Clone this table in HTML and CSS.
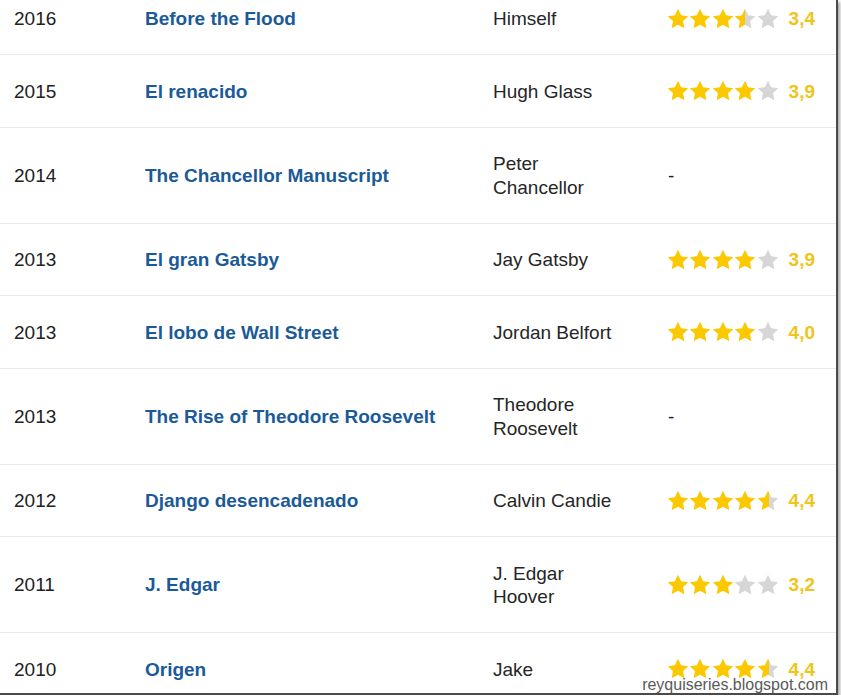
FILE: index.html
```html
<!DOCTYPE html>
<html lang="es">
<head>
<meta charset="utf-8">
<title>Filmografía</title>
<link rel="stylesheet" href="styles.css">
</head>
<body>
<div class="frame">
  <div class="list">
    <div class="row">
      <div class="year">2016</div>
      <div class="title">Before the Flood</div>
      <div class="role">Himself</div>
      <div class="rate">
        <span class="stars">
          <svg class="star on" viewBox="0 0 24 24"><path d="M12 .8l3.4 7.1 7.8 1-5.7 5.4 1.4 7.7L12 18.3l-6.9 3.7 1.4-7.7L.8 8.9l7.8-1z"/></svg><svg class="star on" viewBox="0 0 24 24"><path d="M12 .8l3.4 7.1 7.8 1-5.7 5.4 1.4 7.7L12 18.3l-6.9 3.7 1.4-7.7L.8 8.9l7.8-1z"/></svg><svg class="star on" viewBox="0 0 24 24"><path d="M12 .8l3.4 7.1 7.8 1-5.7 5.4 1.4 7.7L12 18.3l-6.9 3.7 1.4-7.7L.8 8.9l7.8-1z"/></svg><svg class="star" viewBox="0 0 24 24"><defs><linearGradient id="h1"><stop offset="50%" stop-color="#fcc800"/><stop offset="50%" stop-color="#d6d6d6"/></linearGradient></defs><path fill="url(#h1)" d="M12 .8l3.4 7.1 7.8 1-5.7 5.4 1.4 7.7L12 18.3l-6.9 3.7 1.4-7.7L.8 8.9l7.8-1z"/></svg><svg class="star off" viewBox="0 0 24 24"><path d="M12 .8l3.4 7.1 7.8 1-5.7 5.4 1.4 7.7L12 18.3l-6.9 3.7 1.4-7.7L.8 8.9l7.8-1z"/></svg>
        </span>
        <span class="num">3,4</span>
      </div>
    </div>
    <div class="row">
      <div class="year">2015</div>
      <div class="title">El renacido</div>
      <div class="role">Hugh Glass</div>
      <div class="rate">
        <span class="stars">
          <svg class="star on" viewBox="0 0 24 24"><path d="M12 .8l3.4 7.1 7.8 1-5.7 5.4 1.4 7.7L12 18.3l-6.9 3.7 1.4-7.7L.8 8.9l7.8-1z"/></svg><svg class="star on" viewBox="0 0 24 24"><path d="M12 .8l3.4 7.1 7.8 1-5.7 5.4 1.4 7.7L12 18.3l-6.9 3.7 1.4-7.7L.8 8.9l7.8-1z"/></svg><svg class="star on" viewBox="0 0 24 24"><path d="M12 .8l3.4 7.1 7.8 1-5.7 5.4 1.4 7.7L12 18.3l-6.9 3.7 1.4-7.7L.8 8.9l7.8-1z"/></svg><svg class="star on" viewBox="0 0 24 24"><path d="M12 .8l3.4 7.1 7.8 1-5.7 5.4 1.4 7.7L12 18.3l-6.9 3.7 1.4-7.7L.8 8.9l7.8-1z"/></svg><svg class="star off" viewBox="0 0 24 24"><path d="M12 .8l3.4 7.1 7.8 1-5.7 5.4 1.4 7.7L12 18.3l-6.9 3.7 1.4-7.7L.8 8.9l7.8-1z"/></svg>
        </span>
        <span class="num">3,9</span>
      </div>
    </div>
    <div class="row">
      <div class="year">2014</div>
      <div class="title">The Chancellor Manuscript</div>
      <div class="role">Peter Chancellor</div>
      <div class="rate"><span class="dash">-</span></div>
    </div>
    <div class="row">
      <div class="year">2013</div>
      <div class="title">El gran Gatsby</div>
      <div class="role">Jay Gatsby</div>
      <div class="rate">
        <span class="stars">
          <svg class="star on" viewBox="0 0 24 24"><path d="M12 .8l3.4 7.1 7.8 1-5.7 5.4 1.4 7.7L12 18.3l-6.9 3.7 1.4-7.7L.8 8.9l7.8-1z"/></svg><svg class="star on" viewBox="0 0 24 24"><path d="M12 .8l3.4 7.1 7.8 1-5.7 5.4 1.4 7.7L12 18.3l-6.9 3.7 1.4-7.7L.8 8.9l7.8-1z"/></svg><svg class="star on" viewBox="0 0 24 24"><path d="M12 .8l3.4 7.1 7.8 1-5.7 5.4 1.4 7.7L12 18.3l-6.9 3.7 1.4-7.7L.8 8.9l7.8-1z"/></svg><svg class="star on" viewBox="0 0 24 24"><path d="M12 .8l3.4 7.1 7.8 1-5.7 5.4 1.4 7.7L12 18.3l-6.9 3.7 1.4-7.7L.8 8.9l7.8-1z"/></svg><svg class="star off" viewBox="0 0 24 24"><path d="M12 .8l3.4 7.1 7.8 1-5.7 5.4 1.4 7.7L12 18.3l-6.9 3.7 1.4-7.7L.8 8.9l7.8-1z"/></svg>
        </span>
        <span class="num">3,9</span>
      </div>
    </div>
    <div class="row">
      <div class="year">2013</div>
      <div class="title">El lobo de Wall Street</div>
      <div class="role">Jordan Belfort</div>
      <div class="rate">
        <span class="stars">
          <svg class="star on" viewBox="0 0 24 24"><path d="M12 .8l3.4 7.1 7.8 1-5.7 5.4 1.4 7.7L12 18.3l-6.9 3.7 1.4-7.7L.8 8.9l7.8-1z"/></svg><svg class="star on" viewBox="0 0 24 24"><path d="M12 .8l3.4 7.1 7.8 1-5.7 5.4 1.4 7.7L12 18.3l-6.9 3.7 1.4-7.7L.8 8.9l7.8-1z"/></svg><svg class="star on" viewBox="0 0 24 24"><path d="M12 .8l3.4 7.1 7.8 1-5.7 5.4 1.4 7.7L12 18.3l-6.9 3.7 1.4-7.7L.8 8.9l7.8-1z"/></svg><svg class="star on" viewBox="0 0 24 24"><path d="M12 .8l3.4 7.1 7.8 1-5.7 5.4 1.4 7.7L12 18.3l-6.9 3.7 1.4-7.7L.8 8.9l7.8-1z"/></svg><svg class="star off" viewBox="0 0 24 24"><path d="M12 .8l3.4 7.1 7.8 1-5.7 5.4 1.4 7.7L12 18.3l-6.9 3.7 1.4-7.7L.8 8.9l7.8-1z"/></svg>
        </span>
        <span class="num">4,0</span>
      </div>
    </div>
    <div class="row">
      <div class="year">2013</div>
      <div class="title">The Rise of Theodore Roosevelt</div>
      <div class="role">Theodore Roosevelt</div>
      <div class="rate"><span class="dash">-</span></div>
    </div>
    <div class="row">
      <div class="year">2012</div>
      <div class="title">Django desencadenado</div>
      <div class="role">Calvin Candie</div>
      <div class="rate">
        <span class="stars">
          <svg class="star on" viewBox="0 0 24 24"><path d="M12 .8l3.4 7.1 7.8 1-5.7 5.4 1.4 7.7L12 18.3l-6.9 3.7 1.4-7.7L.8 8.9l7.8-1z"/></svg><svg class="star on" viewBox="0 0 24 24"><path d="M12 .8l3.4 7.1 7.8 1-5.7 5.4 1.4 7.7L12 18.3l-6.9 3.7 1.4-7.7L.8 8.9l7.8-1z"/></svg><svg class="star on" viewBox="0 0 24 24"><path d="M12 .8l3.4 7.1 7.8 1-5.7 5.4 1.4 7.7L12 18.3l-6.9 3.7 1.4-7.7L.8 8.9l7.8-1z"/></svg><svg class="star on" viewBox="0 0 24 24"><path d="M12 .8l3.4 7.1 7.8 1-5.7 5.4 1.4 7.7L12 18.3l-6.9 3.7 1.4-7.7L.8 8.9l7.8-1z"/></svg><svg class="star" viewBox="0 0 24 24"><defs><linearGradient id="h2"><stop offset="55%" stop-color="#fcc800"/><stop offset="55%" stop-color="#d6d6d6"/></linearGradient></defs><path fill="url(#h2)" d="M12 .8l3.4 7.1 7.8 1-5.7 5.4 1.4 7.7L12 18.3l-6.9 3.7 1.4-7.7L.8 8.9l7.8-1z"/></svg>
        </span>
        <span class="num">4,4</span>
      </div>
    </div>
    <div class="row">
      <div class="year">2011</div>
      <div class="title">J. Edgar</div>
      <div class="role">J. Edgar Hoover</div>
      <div class="rate">
        <span class="stars">
          <svg class="star on" viewBox="0 0 24 24"><path d="M12 .8l3.4 7.1 7.8 1-5.7 5.4 1.4 7.7L12 18.3l-6.9 3.7 1.4-7.7L.8 8.9l7.8-1z"/></svg><svg class="star on" viewBox="0 0 24 24"><path d="M12 .8l3.4 7.1 7.8 1-5.7 5.4 1.4 7.7L12 18.3l-6.9 3.7 1.4-7.7L.8 8.9l7.8-1z"/></svg><svg class="star on" viewBox="0 0 24 24"><path d="M12 .8l3.4 7.1 7.8 1-5.7 5.4 1.4 7.7L12 18.3l-6.9 3.7 1.4-7.7L.8 8.9l7.8-1z"/></svg><svg class="star off" viewBox="0 0 24 24"><path d="M12 .8l3.4 7.1 7.8 1-5.7 5.4 1.4 7.7L12 18.3l-6.9 3.7 1.4-7.7L.8 8.9l7.8-1z"/></svg><svg class="star off" viewBox="0 0 24 24"><path d="M12 .8l3.4 7.1 7.8 1-5.7 5.4 1.4 7.7L12 18.3l-6.9 3.7 1.4-7.7L.8 8.9l7.8-1z"/></svg>
        </span>
        <span class="num">3,2</span>
      </div>
    </div>
    <div class="row">
      <div class="year">2010</div>
      <div class="title">Origen</div>
      <div class="role">Jake</div>
      <div class="rate">
        <span class="stars">
          <svg class="star on" viewBox="0 0 24 24"><path d="M12 .8l3.4 7.1 7.8 1-5.7 5.4 1.4 7.7L12 18.3l-6.9 3.7 1.4-7.7L.8 8.9l7.8-1z"/></svg><svg class="star on" viewBox="0 0 24 24"><path d="M12 .8l3.4 7.1 7.8 1-5.7 5.4 1.4 7.7L12 18.3l-6.9 3.7 1.4-7.7L.8 8.9l7.8-1z"/></svg><svg class="star on" viewBox="0 0 24 24"><path d="M12 .8l3.4 7.1 7.8 1-5.7 5.4 1.4 7.7L12 18.3l-6.9 3.7 1.4-7.7L.8 8.9l7.8-1z"/></svg><svg class="star on" viewBox="0 0 24 24"><path d="M12 .8l3.4 7.1 7.8 1-5.7 5.4 1.4 7.7L12 18.3l-6.9 3.7 1.4-7.7L.8 8.9l7.8-1z"/></svg><svg class="star" viewBox="0 0 24 24"><defs><linearGradient id="h3"><stop offset="55%" stop-color="#fcc800"/><stop offset="55%" stop-color="#d6d6d6"/></linearGradient></defs><path fill="url(#h3)" d="M12 .8l3.4 7.1 7.8 1-5.7 5.4 1.4 7.7L12 18.3l-6.9 3.7 1.4-7.7L.8 8.9l7.8-1z"/></svg>
        </span>
        <span class="num">4,4</span>
      </div>
    </div>
  </div>
  <div class="watermark">reyquiseries.blogspot.com</div>
</div>
</body>
</html>
```

FILE: styles.css
```css
html, body {
  margin: 0;
  padding: 0;
  background: #ffffff;
}

.frame {
  position: relative;
  width: 836px;
  height: 693px;
  overflow: hidden;
  background: #ffffff;
  border-right: 2px solid #4a4a4a;
  border-bottom: 2px solid #4a4a4a;
  box-shadow: 2px 2px 3px rgba(0, 0, 0, 0.35);
  font-family: "Liberation Sans", Arial, sans-serif;
  font-size: 19px;
  line-height: 23.5px;
  color: #222222;
}

.list {
  margin-top: -17.5px;
}

.row {
  display: grid;
  grid-template-columns: 145px 348px 174px 1fr;
  align-items: center;
  padding: 24.5px 0 23.5px;
  border-bottom: 1px solid #e8e8e8;
}

.year {
  padding-left: 14px;
  color: #222222;
}

.title {
  font-weight: bold;
  color: #1b5a99;
}

.role {
  width: 128px;
  color: #262626;
}

.rate {
  display: flex;
  align-items: center;
}

.stars {
  display: flex;
  align-items: center;
  gap: 0.4px;
  height: 23.5px;
}

.star {
  width: 22px;
  height: 22px;
  display: block;
}

.star.on path {
  fill: #fcc800;
}

.star.off path {
  fill: #d6d6d6;
}

.num {
  margin-left: 10px;
  font-weight: bold;
  color: #f0c419;
}

.dash {
  padding-left: 1px;
  color: #222222;
}

.watermark {
  position: absolute;
  right: 8px;
  bottom: 0;
  font-size: 16px;
  line-height: 16px;
  color: #5a5a5a;
}
```
